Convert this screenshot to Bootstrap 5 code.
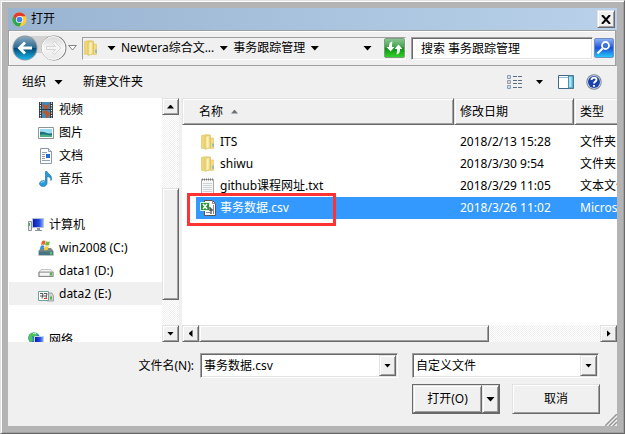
<!DOCTYPE html>
<html lang="zh-CN">
<head>
<meta charset="utf-8">
<meta name="viewport" content="width=device-width, initial-scale=1">
<title>打开</title>
<link rel="stylesheet" href="https://cdn.jsdelivr.net/npm/bootstrap@5.3.0/dist/css/bootstrap.min.css">
<style>
body{font:12px/22px "Noto Sans","Noto Sans CJK SC",sans-serif;color:#000;background:#b4b4b4}
svg{display:block;flex:none}
button,input,select{font:inherit;color:#000;border-radius:0}
.win{border:1px solid;border-color:#e3e3e3 #696969 #696969 #e3e3e3;box-shadow:inset 1px 1px #fff,inset -1px -1px #a0a0a0;padding:7px;background:#b4b4b4}
.face{background:#f0f0f0}
.titlebar{height:22px;background:linear-gradient(90deg,#99b4d1,#b9d1ea);padding:0 2px 0 4px}
.raised{background:#f0f0f0;border:1px solid;border-color:#e3e3e3 #696969 #696969 #e3e3e3;box-shadow:inset 1px 1px #fff,inset -1px -1px #a0a0a0;padding:0}
.sunken{border:1px solid;border-color:#a0a0a0 #fff #fff #a0a0a0;box-shadow:inset 1px 1px #696969,inset -1px -1px #e3e3e3;background:#fff}
.closebtn{width:18px;height:18px}
.navrow{height:36px;border:1px solid #a0a0a0;box-shadow:inset 1px 1px #fff,0 1px #fff;margin-right:1px;padding:0 1px 0 3px}
.plain{border:0;background:none;padding:0}
.history{width:56px;height:28px}
.address{height:23px;border:1px solid;border-color:#a0a0a0 #fff #fff #a0a0a0;margin:0 5px;min-width:0}
.tri{width:9px;height:5px;background:#000;clip-path:polygon(0 0,100% 0,50% 100%);flex:none;display:block}
.crumb{margin:0 5px}
.tri-s{width:7px;height:4px}
.tri-up{clip-path:polygon(50% 0,100% 100%,0 100%)}
.tri-l{width:4px;height:7px;clip-path:polygon(0 50%,100% 0,100% 100%)}
.tri-r{width:4px;height:7px;clip-path:polygon(0 0,100% 50%,0 100%)}
.search{width:182px;height:23px;padding:0 9px;outline:0}
.cmdbar{height:32px;padding:0 15px 0 14px}
.more{margin:0 15px 0 13px}
.mid{min-height:0}
.tree{background:#fff;width:154px;overflow:hidden}
.tree a{height:23px;display:flex;align-items:center;gap:5px;padding-left:30px;color:#000;text-decoration:none;white-space:nowrap}
.tree a.root{padding-left:20px}
.tree a.root.gapped{margin-top:23px}
.tree a.current{background:#f0f0f0;margin-left:1px;padding-left:29px}
.track{background:repeating-conic-gradient(#f0f0f0 0 25%,#fff 0 50%) 0 0/2px 2px}
.vbar{width:17px;margin-right:3px}
.vspace{height:25px}
.sbtn{width:17px;height:17px;display:flex;align-items:center;justify-content:center;flex:none}
.thumb-v{height:112px}
.thumb-h{flex:0 1 290px}
.files{background:#fff;min-width:0}
.filetable{table-layout:fixed;width:100%;border-collapse:separate;border-spacing:0}
.filetable th{font-weight:400;height:27px;padding:0 5px;white-space:nowrap;overflow:hidden}
.filetable th:first-child{padding-left:16px;width:272px}
.filetable th:nth-child(2){width:120px}
.filetable th:last-child{border-right:0;box-shadow:inset 1px 1px #fff,inset 0 -1px #a0a0a0}
.filetable tbody::before{content:"";display:block;height:6px}
.filetable td{height:22px;padding:0 0 0 6px;white-space:nowrap;overflow:hidden}
.filetable td:first-child{padding:0 0 0 14px;overflow:visible}
.fname{height:22px;gap:4px;padding-left:4px}
.picked .fname,.picked td:not(:first-child){background:#39f;color:#fff}
.callout-box{position:absolute;left:-9px;top:-4px;width:149px;height:33px;border:3px solid #f33;pointer-events:none}
.footer-area{height:84px}
.fields{padding:11px 18px 0 0;gap:14px}
.field{gap:6px}
.combo{height:25px;padding:1px}
.combo input,.combo select{border:0;outline:0;background:transparent;padding:0 2px;min-width:0;flex:1;appearance:none;height:21px}
.combo .drop{width:17px;height:21px;display:flex;align-items:center;justify-content:center;flex:none}
.combo-name{width:198px}
.combo-type{width:187px}
.actions{padding:6px 17px 0 0;gap:12px}
.split{border:1px solid #696969;height:30px;width:88px}
.cancel{width:88px;height:30px}
.grip{position:absolute;right:0;bottom:0}
</style>
<script src="https://cdn.jsdelivr.net/npm/bootstrap@5.3.0/dist/js/bootstrap.bundle.min.js"></script>
</head>
<body>
<svg width="0" height="0" class="position-absolute" aria-hidden="true">
<defs>
<linearGradient id="gy"><stop offset="0" stop-color="#ecd57a"/><stop offset=".5" stop-color="#fdf3bd"/><stop offset="1" stop-color="#e6c75f"/></linearGradient>
<linearGradient id="gb" x2="0" y2="1"><stop offset="0" stop-color="#8aa9bc"/><stop offset=".48" stop-color="#2a6a94"/><stop offset=".5" stop-color="#044672"/><stop offset="1" stop-color="#16b4ec"/></linearGradient>
<linearGradient id="gw" x2="0" y2="1"><stop offset="0" stop-color="#d8d8d8"/><stop offset=".5" stop-color="#f6f6f6"/><stop offset="1" stop-color="#e8e8e8"/></linearGradient>
<linearGradient id="gg" x2="0" y2="1"><stop offset="0" stop-color="#8fc79a"/><stop offset=".45" stop-color="#3fa648"/><stop offset=".5" stop-color="#0b8d13"/><stop offset="1" stop-color="#31d52b"/></linearGradient>
<linearGradient id="gs" x2="0" y2="1"><stop offset="0" stop-color="#8fb6f4"/><stop offset=".5" stop-color="#1c50d8"/><stop offset="1" stop-color="#25cdfa"/></linearGradient>
<linearGradient id="gm" x2="1" y2="0"><stop offset="0" stop-color="#0818a8"/><stop offset=".6" stop-color="#2448e0"/><stop offset="1" stop-color="#88b8ff"/></linearGradient>
<symbol id="folder" viewBox="0 0 16 16"><path d="M1.500 1.500 5 .800h4v13.500H1.500z" fill="#eed778" stroke="#dcc56c" stroke-width=".7"/><path d="M10 4h3.500v10.500H10z" fill="#f3dd88" stroke="#dcc267" stroke-width=".6"/><path d="M5 2.500 10.500 1v12.500L5 15.500z" fill="url(#gy)" stroke="#d9bd5c" stroke-width=".6"/><path d="M13 9.500v3.500" stroke="#4ca5cf" stroke-width="1"/></symbol>
<symbol id="drive" viewBox="0 0 16 16"><path d="M3.500 6h9L15.500 9v5H.5V9z" fill="#999"/><path d="M3.500 6.500h9L15 9H1z" fill="#f3f3f3"/><path d="M1 9h14v4.500H1z" fill="#d5d5d5" stroke="#777" stroke-width=".7"/><path d="M2 10h9v2.500H2z" fill="#f7f7f7"/><path d="M13 9.500v3" stroke="#22b323" stroke-width="1.500"/></symbol>
</defs>
</svg>

<main class="win vh-100 d-flex flex-column overflow-hidden">
 <header class="titlebar d-flex align-items-center flex-shrink-0">
  <svg width="15" height="15" viewBox="0 0 16 16"><circle cx="8" cy="8" r="7.500" fill="#fc3"/><path d="M1.500 4.200A7.500 7.500 0 0 1 14.500 4.500H8L5 10z" fill="#e33b2e"/><path d="M1.500 4.200A7.500 7.500 0 0 0 8 15.500L11 9.500 5 9.500z" fill="#2fa84f"/><circle cx="8" cy="8" r="3.800" fill="#fff"/><circle cx="8" cy="8" r="3" fill="#3f82ee"/></svg>
  <span class="ms-1 flex-grow-1">打开</span>
  <button class="closebtn raised d-flex align-items-center justify-content-center" aria-label="关闭"><svg width="10" height="9" viewBox="0 0 10 9"><path d="M1 0 9 9M9 0 1 9" stroke="#000" stroke-width="2"/></svg></button>
 </header>

 <section class="navrow face d-flex align-items-center flex-shrink-0">
  <svg class="history" viewBox="0 0 56 28" role="img" aria-label="后退和前进"><path d="M10 2H43V19H10z" fill="#d2d2d2"/><circle cx="13" cy="14" r="12.500" fill="#8c99a2"/><circle cx="13" cy="14" r="11.500" fill="url(#gb)"/><path d="M5.500 14 12 7.500l2 2L11 12.500h9v3h-9l3 3-2 2z" fill="#fff"/><circle cx="42" cy="14" r="12.500" fill="#858585"/><circle cx="41.500" cy="14" r="11.500" fill="url(#gw)" stroke="#fff"/><path d="M49 14 42.500 7.500l-2 2 3 3h-9v3h9l-3 3 2 2z" fill="#f5f5f5" stroke="#ccc" stroke-width=".8"/></svg>
  <button class="plain" aria-label="历史"><svg width="9" height="6" viewBox="0 0 9 6"><path d="M.700.500h7.600L4.500 5z" fill="#fff" stroke="#666" stroke-width=".8"/></svg></button>
  <nav class="address d-flex align-items-center flex-grow-1" aria-label="位置">
   <svg width="16" height="16"><use href="#folder"/></svg>
   <i class="tri ms-2"></i>
   <button class="plain crumb text-nowrap">Newtera综合文...</button>
   <i class="tri"></i>
   <button class="plain crumb text-nowrap">事务跟踪管理</button>
   <i class="tri"></i>
   <button class="plain ms-auto me-2" aria-label="以前的位置"><i class="tri"></i></button>
   <button class="plain ms-1" aria-label="刷新"><svg width="21" height="20" viewBox="0 0 21 20"><rect x=".5" y=".5" width="20" height="19" rx="1.500" fill="url(#gg)" stroke="#7d9c80"/><path d="M8.500 3.500C5.500 4 5 6.500 5 9H2.500L6.500 13.500 10.500 9H8c0-2 0-3.500.5-5.500zM12.500 16.500c3-.5 3.500-3 3.500-5.500h2.500L14.500 6.500 10.500 11H13c0 2 0 3.500-.5 5.500z" fill="#fff"/></svg></button>
  </nav>
  <input class="search sunken flex-shrink-0" aria-label="搜索" value="搜索 事务跟踪管理">
  <button class="plain flex-shrink-0" aria-label="开始搜索"><svg width="21" height="20" viewBox="0 0 21 20"><rect x="1.500" y=".5" width="19" height="19" rx="1.500" fill="url(#gs)" stroke="#6c8fc8"/><circle cx="12.500" cy="7.500" r="3.500" fill="#3d72d6" stroke="#fff" stroke-width="1.800"/><path d="m9.500 10.500-5 5" stroke="#fff" stroke-width="2.200"/></svg></button>
 </section>

 <section class="cmdbar face d-flex align-items-center flex-shrink-0">
  <button class="plain d-flex align-items-center gap-2">组织 <i class="tri"></i></button>
  <button class="plain ms-3 ps-1">新建文件夹</button>
  <button class="plain ms-auto" aria-label="视图"><svg width="16" height="14" viewBox="0 0 16 14"><g fill="#fff" stroke="#8ba0b3"><path d="M.5.500h3v3h-3zM.5 5.500h3v3h-3zM.5 10.500h3v3h-3z"/></g><path d="M1.500 2h1M1.500 12h1" stroke="#2d72bd"/><path d="M1.500 7h1" stroke="#d22"/><path d="M6 1.500h4m1 0h4M6 5.500h4m1 0h4M6 8.500h4m1 0h4M6 12.500h4m1 0h4" stroke="#587087"/></svg></button>
  <button class="plain more" aria-label="更多视图"><i class="tri tri-s"></i></button>
  <button class="plain" aria-label="预览窗格"><svg width="16" height="14" viewBox="0 0 16 14"><path d="M.5.500h15v13H.5z" fill="#fff" stroke="#426887"/><path d="M1 2.500h9" stroke="#9bbbd2"/><path d="M10.500 1h4.500v12h-4.500z" fill="#7fd1e8" stroke="#4a8fab"/><path d="M12 2v10" stroke="#d4f6ff"/></svg></button>
  <button class="plain ms-2 ps-1" aria-label="帮助"><svg width="16" height="16" viewBox="0 0 16 16"><circle cx="8" cy="8" r="7.700" fill="#777f91"/><circle cx="8" cy="8" r="6.800" fill="#d8dfed"/><circle cx="8" cy="8" r="6" fill="#1c43ad"/><path d="M5.500 6C5.500 2.800 10.700 3 10.500 6 10.400 7.500 8 7.700 8 9.500M8 11v1.800" fill="none" stroke="#fff" stroke-width="1.900"/></svg></button>
 </section>

 <section class="mid face d-flex flex-grow-1 overflow-hidden">
  <nav class="tree flex-shrink-0" aria-label="文件夹">
   <a href="#"><svg width="16" height="16" viewBox="0 0 16 16"><path d="M1 0h14v16H1z" fill="#30383c"/><path d="M4 0h8v7H4zM4 8h8v8H4z" fill="#3c8cc3"/><path d="m5 1 3 3 3-3v4L9 7H7L5 5zM4 10l4-2 4 3-2 5H8l-1-4z" fill="#b9582a"/><path d="M2.500.500v16M13.500.500v16" stroke="#fff" stroke-width="1.200" stroke-dasharray="1.300 1.200"/></svg>视频</a>
   <a href="#"><svg width="16" height="16" viewBox="0 0 16 16"><path d="M.5 2.500h15v11H.5z" fill="#fff" stroke="#8f9597"/><path d="M2 4h12v8H2z" fill="#9cdcf2"/><path d="M2 7c5-1 7 3 12 1v4H2z" fill="#18727b"/><path d="M2 10c4-2 8 1 12 0v2H2z" fill="#4cae83"/></svg>图片</a>
   <a href="#"><svg width="16" height="16" viewBox="0 0 16 16"><path d="M2.500.500h8l3 3v12h-11z" fill="#fff" stroke="#8d99a4"/><path d="M10.500.500v3h3" fill="#dce6ee" stroke="#8d99a4"/><path d="M4 4.500h5M4 6.500h3M4 8.500h3M4 10.500h3M4 12.500h8" stroke="#91a2b0"/><path d="M8 6h4v4H8z" fill="#236ccc"/></svg>文档</a>
   <a href="#"><svg width="16" height="16" viewBox="0 0 16 16"><path d="M7.500.500h1.500c1 3 6 3.500 4 9 0-3-2-4-4-4v6.500C9 16.500 1.500 16.500 1.500 12.500 2 9.500 6 9 7.500 10.300z" fill="#299bdc" stroke="#1672ae" stroke-width=".7"/><path d="M3 12c1-1.500 2.500-1.500 3.500-1.200" stroke="#a8e1ff" fill="none"/></svg>音乐</a>
   <a href="#" class="root gapped"><svg width="16" height="16" viewBox="0 0 16 16"><path d="M.5 4.500h3v9h-3z" fill="#e7e9ea" stroke="#899199"/><path d="M1.500 6v3" stroke="#2db84a"/><path d="M4.500 1.500h11v9h-11z" fill="url(#gm)" stroke="#bbc5cf"/><path d="M9 11h3v2h2v1H7v-1h2z" fill="#8b949b"/></svg>计算机</a>
   <a href="#"><svg width="16" height="16" viewBox="0 0 16 16"><path d="m3 8 10 0 2.500 3v4.500H.5V11z" fill="#73868c"/><path d="M1 11.500h14v3.500H1z" fill="#487582"/><path d="M13 12v2.500" stroke="#5bea4f" stroke-width="1.500"/><path d="M4 1q2-1 3.500 0l-1 4q-2-1-3.500 0z" fill="#e9602d"/><path d="M8 1.200q2 1 4 0L11 5q-2 1-4 0z" fill="#70b83b"/><path d="M2.800 5.700q2-1 3.500 0l-1 3.700q-2-1-3.500 0z" fill="#3a8ee0"/><path d="M6.800 5.900q2 1 4 0l-1 3.800q-2 1-4 0z" fill="#f9c934"/></svg>win2008 (C:)</a>
   <a href="#"><svg width="16" height="16"><use href="#drive"/></svg>data1 (D:)</a>
   <a href="#" class="current" aria-current="true"><svg width="16" height="16" viewBox="0 0 16 16"><path d="M9 7h5l1.500 3v5H9z" fill="#d2d2d2" stroke="#888" stroke-width=".7"/><path d="M13 10.500v3" stroke="#22b323" stroke-width="1.500"/><path d="M.5 5.500h10v9H.5z" fill="#fff" stroke="#72a19a"/><path d="M2 7.500h3l-1 5M6 7.500h3l-1 5M2 10h7" stroke="#565656" fill="none"/><path d="M6 12.500h3" stroke="#e33"/></svg>data2 (E:)</a>
   <a href="#" class="root gapped"><svg width="16" height="16" viewBox="0 0 16 16"><circle cx="6" cy="6" r="5.800" fill="#2879cf"/><path d="M2 2q4-3 8 0L7 5 4 4 5 8l-2 3Q-1 7 2 2z" fill="#4bc650"/><path d="M5 1.500q2-1 3 0" stroke="#dff" fill="none"/><path d="M6.500 4.500h9v8h-9z" fill="url(#gm)" stroke="#c5d4e5"/></svg>网络</a>
  </nav>
  <div class="vbar track d-flex flex-column flex-shrink-0">
   <button class="raised sbtn" aria-label="向上滚动"><i class="tri tri-s tri-up"></i></button>
   <div class="flex-grow-1"></div>
   <div class="raised thumb-v flex-shrink-0"></div>
   <div class="vspace flex-shrink-0"></div>
   <button class="raised sbtn" aria-label="向下滚动"><i class="tri tri-s"></i></button>
  </div>
  <div class="files flex-grow-1 d-flex flex-column">
   <table class="filetable">
    <thead><tr><th class="raised"><span class="d-flex align-items-center gap-2">名称 <i class="tri tri-s tri-up bg-secondary"></i></span></th><th class="raised">修改日期</th><th class="raised">类型</th></tr></thead>
    <tbody>
     <tr><td><div class="fname d-flex align-items-center"><svg width="16" height="16"><use href="#folder"/></svg>ITS</div></td><td>2018/2/13 15:28</td><td>文件夹</td></tr>
     <tr><td><div class="fname d-flex align-items-center"><svg width="16" height="16"><use href="#folder"/></svg>shiwu</div></td><td>2018/3/30 9:54</td><td>文件夹</td></tr>
     <tr><td><div class="fname d-flex align-items-center"><svg width="16" height="16" viewBox="0 0 16 16"><path d="M1.500 1.500h12v14h-12z" fill="#f7f7f7" stroke="#a8a8a8"/><path d="M2 1.500h12" stroke="#777" stroke-width="2" stroke-dasharray="1 1"/><path d="M3 5.500h9M3 7.500h9M3 9.500h9M3 11.500h9M3 13.500h9" stroke="#cdd2d6"/></svg>github课程网址.txt</div></td><td>2018/3/29 11:05</td><td>文本文件</td></tr>
     <tr class="picked"><td><div class="fname d-flex align-items-center position-relative"><svg width="16" height="16" viewBox="0 0 16 16"><path d="M4.500.500h8l3 3v12h-11z" fill="#fff" stroke="#555"/><path d="M12.500.500v3h3M13.500 5v9M6 12.500h4" stroke="#889" fill="none"/><path d="M.5 2.500h9v8h-9z" fill="#289335" stroke="#d8f4d4"/><path d="m3 4 4 5M7 4 3 9" stroke="#fff" stroke-width="1.500"/><path d="M10 7v4h2V9h-2M11 12v2" stroke="#222" fill="none"/></svg>事务数据.csv<span class="callout-box"></span></div></td><td>2018/3/26 11:02</td><td>Microsoft</td></tr>
    </tbody>
   </table>
   <div class="track d-flex mt-auto">
    <button class="raised sbtn" aria-label="向左滚动"><i class="tri tri-l"></i></button>
    <div class="raised thumb-h"></div>
    <button class="raised sbtn ms-auto" aria-label="向右滚动"><i class="tri tri-r"></i></button>
   </div>
  </div>
 </section>

 <footer class="footer-area face position-relative flex-shrink-0">
  <div class="fields d-flex justify-content-end">
   <div class="field d-flex align-items-center">
    <label for="fn">文件名(N):</label>
    <div class="combo combo-name sunken d-flex"><input id="fn" value="事务数据.csv"><button class="raised drop" aria-label="文件名列表"><i class="tri tri-s"></i></button></div>
   </div>
   <div class="combo combo-type sunken d-flex"><select aria-label="文件类型"><option>自定义文件</option></select><span class="raised drop"><i class="tri tri-s"></i></span></div>
  </div>
  <div class="actions d-flex justify-content-end">
   <div class="split d-flex"><button class="raised flex-grow-1">打开(O)</button><button class="raised sbtn h-100" aria-label="打开方式"><i class="tri"></i></button></div>
   <button class="raised cancel">取消</button>
  </div>
  <svg class="grip" width="12" height="12" viewBox="0 0 12 12"><path d="M0 12 12 0M4 12l8-8M8 12l4-4" stroke="#969696" stroke-width="1.500"/></svg>
 </footer>
</main>
</body>
</html>
